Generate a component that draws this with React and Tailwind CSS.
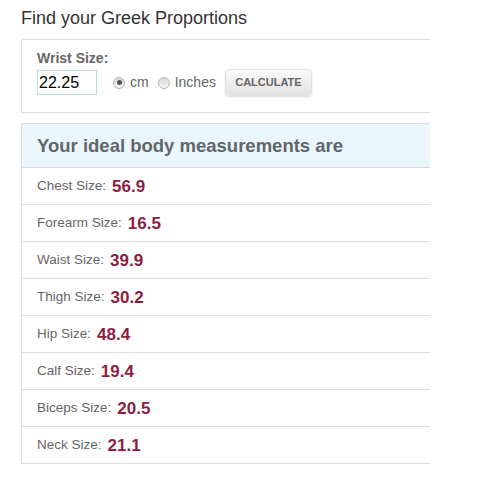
import React from "react";

const rows = [
  ["Chest Size:", "56.9"],
  ["Forearm Size:", "16.5"],
  ["Waist Size:", "39.9"],
  ["Thigh Size:", "30.2"],
  ["Hip Size:", "48.4"],
  ["Calf Size:", "19.4"],
  ["Biceps Size:", "20.5"],
  ["Neck Size:", "21.1"],
];

function Radio({ checked }) {
  return (
    <span className="inline-flex h-[12px] w-[12px] items-center justify-center rounded-full border border-[#b5b5b5] bg-gradient-to-b from-[#d6d6d6] to-[#f8f8f8]">
      {checked && <span className="h-[5px] w-[5px] rounded-full bg-[#555]" />}
    </span>
  );
}

export default function App() {
  return (
    <div
      className="min-h-[478px] bg-white pl-[21px] pt-[6px]"
      style={{ fontFamily: '"Liberation Sans", Arial, sans-serif' }}
    >
      <h2 className="text-[18px] leading-[24px] text-[#333]">Find your Greek Proportions</h2>
      <div className="mt-[9px] w-[409px] border border-r-0 border-[#ddd] px-[15px] pb-[16px] pt-[9px]">
        <div className="text-[14px] font-bold leading-[18px] text-[#666]">Wrist Size:</div>
        <div className="mt-[2px] flex items-center">
          <div className="flex h-[25px] w-[60px] items-center border border-[#b8dcea] pl-[1px] text-[16px] text-black">
            22.25
          </div>
          <label className="ml-[16px] flex items-center text-[14px] text-[#666]">
            <Radio checked />
            <span className="ml-[5px]">cm</span>
          </label>
          <label className="ml-[9px] flex items-center text-[14px] text-[#666]">
            <Radio />
            <span className="ml-[5px]">Inches</span>
          </label>
          <button className="ml-[9px] flex h-[27px] w-[87px] items-center justify-center rounded-[4px] border border-[#e2e2e2] bg-gradient-to-b from-[#fafafa] to-[#e2e2e2] text-[11px] font-bold text-[#666] shadow-[0_1px_2px_rgba(0,0,0,0.15)]">
            CALCULATE
          </button>
        </div>
      </div>
      <div className="mt-[10px] w-[409px] border-l border-t border-[#ddd]">
        <div className="flex h-[44px] items-center border-b border-[#ddd] bg-[#eaf6fd] px-[15px] pt-[1px] text-[18.5px] font-bold text-[#636669]">
          Your ideal body measurements are
        </div>
        {rows.map(([label, value]) => (
          <div
            key={label}
            className="flex h-[37px] items-center border-b border-[#ddd] px-[15px] pt-[1px]"
          >
            <span className="text-[13.5px] text-[#666]">{label}</span>
            <span className="ml-[6px] text-[17px] font-bold text-[#8b1e3f]">{value}</span>
          </div>
        ))}
      </div>
    </div>
  );
}
